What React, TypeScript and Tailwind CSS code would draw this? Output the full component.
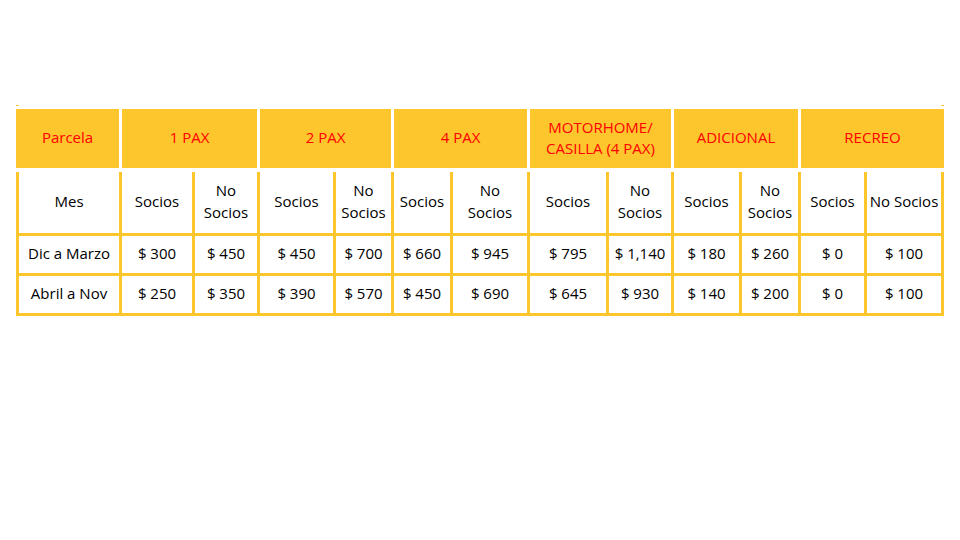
const header = [
  { label: "Parcela", w: "w-[103px]" },
  { label: "1 PAX", w: "w-[135px]" },
  { label: "2 PAX", w: "w-[131px]" },
  { label: "4 PAX", w: "w-[133px]" },
  { label: "MOTORHOME/ CASILLA (4 PAX)", w: "w-[141px]" },
  { label: "ADICIONAL", w: "w-[124px]" },
  { label: "RECREO", w: "w-[143px]" },
];

// two-line labels are broken on purpose, the last one stays on one line
const subHeader = [
  ["Mes"],
  ["Socios"],
  ["No", "Socios"],
  ["Socios"],
  ["No", "Socios"],
  ["Socios"],
  ["No", "Socios"],
  ["Socios"],
  ["No", "Socios"],
  ["Socios"],
  ["No", "Socios"],
  ["Socios"],
  ["No Socios"],
];

const rows = [
  ["Dic a Marzo", "$ 300", "$ 450", "$ 450", "$ 700", "$ 660", "$ 945", "$ 795", "$ 1,140", "$ 180", "$ 260", "$ 0", "$ 100"],
  ["Abril a Nov", "$ 250", "$ 350", "$ 390", "$ 570", "$ 450", "$ 690", "$ 645", "$ 930", "$ 140", "$ 200", "$ 0", "$ 100"],
];

export default function App() {
  return (
    <div className="w-[960px] h-[540px] bg-white pt-[105px] pl-4 font-['Open_Sans',sans-serif] text-[15px] text-black">
      <div className="w-[928px]">
        {/* top edge of the outer border, barely visible */}
        <div className="flex justify-between h-px mb-[3px]">
          <span className="w-[3px] bg-[#fdc62d]" />
          <span className="w-[3px] bg-[#fdc62d]" />
        </div>

        {/* header */}
        <div className="flex gap-[3px] h-[59px]">
          {header.map((h) => (
            <div
              key={h.label}
              className={`${h.w} bg-[#fdc62d] text-[#ff0000] flex items-center justify-center text-center leading-[21px] px-1 pb-[2px]`}
            >
              {h.label}
            </div>
          ))}
        </div>

        {/* body */}
        <div className="mt-[4px] bg-[#fdc62d] px-[3px] pb-[3px] grid gap-[3px] grid-cols-[100px_70px_62px_73px_55px_56px_74px_76px_62px_65px_56px_63px_74px] grid-rows-[61px_37px_37px]">
          {subHeader.map((s, i) => (
            <div key={i} className="bg-white flex flex-col items-center justify-center text-center leading-[22px] pb-[4px] whitespace-nowrap">
              {s.map((line) => (
                <span key={line}>{line}</span>
              ))}
            </div>
          ))}
          {rows.map((r, ri) =>
            r.map((c, ci) => (
              <div
                key={`${ri}-${ci}`}
                className={`bg-white flex items-center justify-center text-center whitespace-nowrap ${ri === 0 ? "pb-[3px]" : "pb-[2px]"}`}
              >
                {c}
              </div>
            ))
          )}
        </div>
      </div>
    </div>
  );
}
